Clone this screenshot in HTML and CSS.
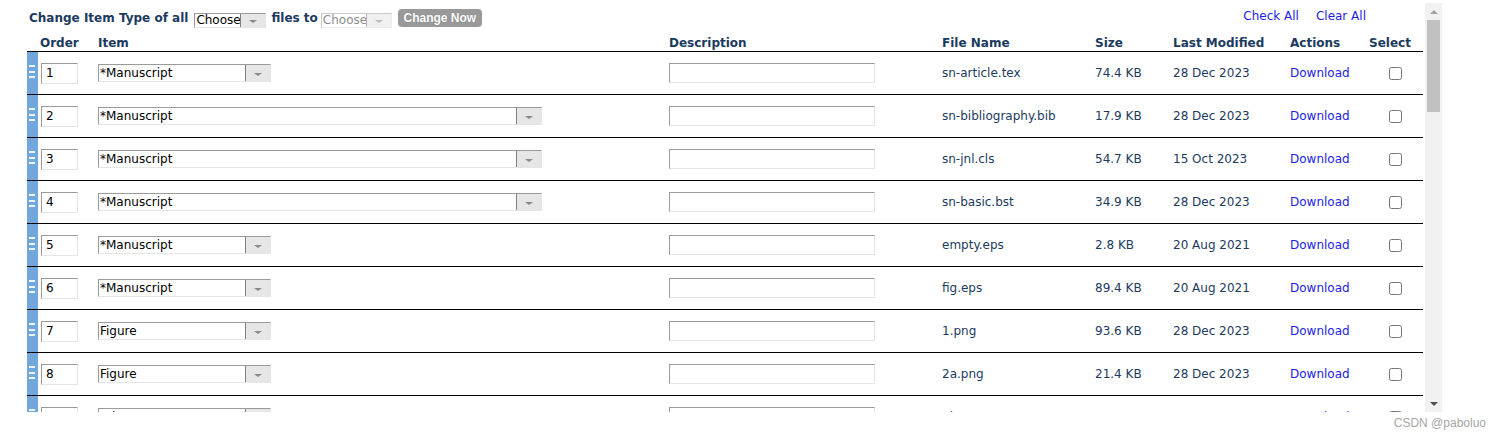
FILE: index.html
```html
<!DOCTYPE html>
<html>
<head>
<meta charset="utf-8">
<title>Files</title>
<link rel="stylesheet" href="styles.css">
</head>
<body>
<div class="frame">
  <div class="pane">
    <div class="toolbar">
      <div class="bulk">
        <span class="lbl">Change Item Type of all</span>
        <span class="sel sel-sm sel-first"><span class="sel-val">Choose</span><span class="sel-btn"><i class="tri"></i></span></span>
        <span class="lbl lbl-files">files to</span>
        <span class="sel sel-sm sel-off"><span class="sel-val">Choose</span><span class="sel-btn"><i class="tri"></i></span></span>
        <button class="btn-change">Change Now</button>
      </div>
      <div class="bulk-links"><a href="#">Check All</a><a href="#">Clear All</a></div>
    </div>

    <div class="list">
      <div class="row head">
        <div></div>
        <div class="c c-order">Order</div>
        <div class="c">Item</div>
        <div class="c">Description</div>
        <div class="c">File Name</div>
        <div class="c">Size</div>
        <div class="c">Last Modified</div>
        <div class="c">Actions</div>
        <div class="c">Select</div>
      </div>

      <div class="row">
        <div class="handle"><svg width="6" height="13" viewBox="0 0 6 13"><rect y="0" width="6" height="2"/><rect y="6" width="6" height="2"/><rect y="11" width="6" height="2"/></svg></div>
        <div class="c c-order"><input class="in in-order" value="1"></div>
        <div class="c"><span class="sel sel-item"><span class="sel-val">*Manuscript</span><span class="sel-btn"><i class="tri"></i></span></span></div>
        <div class="c"><input class="in in-desc"></div>
        <div class="c">sn-article.tex</div>
        <div class="c">74.4 KB</div>
        <div class="c">28 Dec 2023</div>
        <div class="c"><a href="#">Download</a></div>
        <div class="c c-check"><input type="checkbox"></div>
      </div>

      <div class="row">
        <div class="handle"><svg width="6" height="13" viewBox="0 0 6 13"><rect y="0" width="6" height="2"/><rect y="6" width="6" height="2"/><rect y="11" width="6" height="2"/></svg></div>
        <div class="c c-order"><input class="in in-order" value="2"></div>
        <div class="c"><span class="sel sel-item sel-wide"><span class="sel-val">*Manuscript</span><span class="sel-btn"><i class="tri"></i></span></span></div>
        <div class="c"><input class="in in-desc"></div>
        <div class="c">sn-bibliography.bib</div>
        <div class="c">17.9 KB</div>
        <div class="c">28 Dec 2023</div>
        <div class="c"><a href="#">Download</a></div>
        <div class="c c-check"><input type="checkbox"></div>
      </div>

      <div class="row">
        <div class="handle"><svg width="6" height="13" viewBox="0 0 6 13"><rect y="0" width="6" height="2"/><rect y="6" width="6" height="2"/><rect y="11" width="6" height="2"/></svg></div>
        <div class="c c-order"><input class="in in-order" value="3"></div>
        <div class="c"><span class="sel sel-item sel-wide"><span class="sel-val">*Manuscript</span><span class="sel-btn"><i class="tri"></i></span></span></div>
        <div class="c"><input class="in in-desc"></div>
        <div class="c">sn-jnl.cls</div>
        <div class="c">54.7 KB</div>
        <div class="c">15 Oct 2023</div>
        <div class="c"><a href="#">Download</a></div>
        <div class="c c-check"><input type="checkbox"></div>
      </div>

      <div class="row">
        <div class="handle"><svg width="6" height="13" viewBox="0 0 6 13"><rect y="0" width="6" height="2"/><rect y="6" width="6" height="2"/><rect y="11" width="6" height="2"/></svg></div>
        <div class="c c-order"><input class="in in-order" value="4"></div>
        <div class="c"><span class="sel sel-item sel-wide"><span class="sel-val">*Manuscript</span><span class="sel-btn"><i class="tri"></i></span></span></div>
        <div class="c"><input class="in in-desc"></div>
        <div class="c">sn-basic.bst</div>
        <div class="c">34.9 KB</div>
        <div class="c">28 Dec 2023</div>
        <div class="c"><a href="#">Download</a></div>
        <div class="c c-check"><input type="checkbox"></div>
      </div>

      <div class="row">
        <div class="handle"><svg width="6" height="13" viewBox="0 0 6 13"><rect y="0" width="6" height="2"/><rect y="6" width="6" height="2"/><rect y="11" width="6" height="2"/></svg></div>
        <div class="c c-order"><input class="in in-order" value="5"></div>
        <div class="c"><span class="sel sel-item"><span class="sel-val">*Manuscript</span><span class="sel-btn"><i class="tri"></i></span></span></div>
        <div class="c"><input class="in in-desc"></div>
        <div class="c">empty.eps</div>
        <div class="c">2.8 KB</div>
        <div class="c">20 Aug 2021</div>
        <div class="c"><a href="#">Download</a></div>
        <div class="c c-check"><input type="checkbox"></div>
      </div>

      <div class="row">
        <div class="handle"><svg width="6" height="13" viewBox="0 0 6 13"><rect y="0" width="6" height="2"/><rect y="6" width="6" height="2"/><rect y="11" width="6" height="2"/></svg></div>
        <div class="c c-order"><input class="in in-order" value="6"></div>
        <div class="c"><span class="sel sel-item"><span class="sel-val">*Manuscript</span><span class="sel-btn"><i class="tri"></i></span></span></div>
        <div class="c"><input class="in in-desc"></div>
        <div class="c">fig.eps</div>
        <div class="c">89.4 KB</div>
        <div class="c">20 Aug 2021</div>
        <div class="c"><a href="#">Download</a></div>
        <div class="c c-check"><input type="checkbox"></div>
      </div>

      <div class="row">
        <div class="handle"><svg width="6" height="13" viewBox="0 0 6 13"><rect y="0" width="6" height="2"/><rect y="6" width="6" height="2"/><rect y="11" width="6" height="2"/></svg></div>
        <div class="c c-order"><input class="in in-order" value="7"></div>
        <div class="c"><span class="sel sel-item"><span class="sel-val">Figure</span><span class="sel-btn"><i class="tri"></i></span></span></div>
        <div class="c"><input class="in in-desc"></div>
        <div class="c">1.png</div>
        <div class="c">93.6 KB</div>
        <div class="c">28 Dec 2023</div>
        <div class="c"><a href="#">Download</a></div>
        <div class="c c-check"><input type="checkbox"></div>
      </div>

      <div class="row">
        <div class="handle"><svg width="6" height="13" viewBox="0 0 6 13"><rect y="0" width="6" height="2"/><rect y="6" width="6" height="2"/><rect y="11" width="6" height="2"/></svg></div>
        <div class="c c-order"><input class="in in-order" value="8"></div>
        <div class="c"><span class="sel sel-item"><span class="sel-val">Figure</span><span class="sel-btn"><i class="tri"></i></span></span></div>
        <div class="c"><input class="in in-desc"></div>
        <div class="c">2a.png</div>
        <div class="c">21.4 KB</div>
        <div class="c">28 Dec 2023</div>
        <div class="c"><a href="#">Download</a></div>
        <div class="c c-check"><input type="checkbox"></div>
      </div>

      <div class="row">
        <div class="handle"><svg width="6" height="13" viewBox="0 0 6 13"><rect y="0" width="6" height="2"/><rect y="6" width="6" height="2"/><rect y="11" width="6" height="2"/></svg></div>
        <div class="c c-order"><input class="in in-order" value="9"></div>
        <div class="c"><span class="sel sel-item"><span class="sel-val">*Figure</span><span class="sel-btn"><i class="tri"></i></span></span></div>
        <div class="c"><input class="in in-desc"></div>
        <div class="c">2b.png</div>
        <div class="c">36.1 KB</div>
        <div class="c">28 Dec 2023</div>
        <div class="c"><a href="#">Download</a></div>
        <div class="c c-check"><input type="checkbox"></div>
      </div>
    </div>
  </div>

  <div class="scrollbar">
    <div class="sb-btn"><i class="tri-up"></i></div>
    <div class="sb-thumb"></div>
    <div class="sb-track"></div>
    <div class="sb-btn"><i class="tri-down"></i></div>
  </div>
</div>
<div class="watermark">CSDN @paboluo</div>
</body>
</html>
```

FILE: styles.css
```css
body {
  margin: 0;
  background: #fff;
  font-family: "DejaVu Sans", Verdana, sans-serif;
  font-size: 12px;
  color: #1b3a60;
}

a {
  color: #2222e6;
  text-decoration: none;
}

.frame {
  display: flex;
  width: 1442px;
  height: 409px;
  margin-top: 3px;
}

.pane {
  flex: 1;
  min-width: 0;
  overflow: hidden;
  padding: 0 2px 0 27px;
}

/* toolbar */
.toolbar {
  display: flex;
  align-items: center;
  justify-content: space-between;
  height: 26px;
  padding-top: 2px;
}

.bulk {
  display: flex;
  align-items: center;
  padding-left: 2px;
}

.lbl {
  font-weight: bold;
  white-space: nowrap;
}

.lbl-files {
  margin-left: 5px;
}

.bulk-links {
  display: flex;
  gap: 17px;
  margin-right: 57px;
  margin-bottom: 4px;
}

.btn-change {
  width: 84px;
  height: 18px;
  margin-left: 6px;
  padding: 0;
  border: 0;
  border-radius: 4px;
  background: #999;
  color: #fff;
  font: bold 12px "Liberation Sans", Arial, sans-serif;
  text-shadow: 0 0 1px #777;
}

/* pseudo selects */
.sel {
  display: inline-flex;
  box-sizing: border-box;
  height: 18px;
  border: 1px solid;
  border-color: #9a9a9a #e6e6e6 #e6e6e6 #9a9a9a;
  background: #fff;
  color: #000;
  vertical-align: middle;
}

.sel-val {
  flex: 1;
  min-width: 0;
  overflow: hidden;
  padding-left: 1px;
  line-height: 16px;
  white-space: nowrap;
}

.sel-btn {
  width: 24px;
  display: flex;
  align-items: center;
  justify-content: center;
  background: #e6e6e6;
  border-left: 1px solid #7f7f7f;
}

.tri {
  width: 0;
  height: 0;
  margin-top: 2px;
  border-left: 4px solid transparent;
  border-right: 4px solid transparent;
  border-top: 3px solid #888;
}

.sel-sm {
  width: 72px;
  height: 15px;
  margin-top: 5px;
}

.sel-sm .sel-val {
  line-height: 13px;
}

.sel-first {
  margin-left: 6px;
}

.sel-off {
  width: 71px;
  margin-left: 3px;
  border-color: #c8c8c8 #ececec #ececec #c8c8c8;
}

.sel-off .sel-val {
  color: #8d8d8d;
}

.sel-off .sel-btn {
  background: #f0f0f0;
  border-left-color: #b4b4b4;
}

.sel-off .tri {
  border-top-color: #bcbcbc;
}

.sel-item {
  width: 173px;
}

.sel-wide {
  width: 444px;
}

/* list grid */
.row {
  display: grid;
  grid-template-columns: 11px 56px 571px 273px 153px 78px 117px 79px 58px;
  align-items: center;
  box-sizing: border-box;
  height: 43px;
  border-bottom: 1px solid #000;
}

.row.head {
  height: 21px;
  padding-top: 4px;
  font-weight: bold;
}

.c {
  padding-left: 4px;
  white-space: nowrap;
}

.c-order {
  padding-left: 3px;
}

.head .c-order {
  padding-left: 2px;
}

.c-check {
  padding-left: 0;
  display: flex;
  justify-content: center;
}

.c-check input {
  margin: 0 0 0 2px;
  width: 13px;
  height: 13px;
}

.handle {
  align-self: stretch;
  background: #72a7dc;
  padding: 13px 0 0 2px;
}

.handle svg {
  display: block;
  fill: #eef4fb;
}

.in {
  box-sizing: border-box;
  display: block;
  height: 21px;
  margin: 0;
  padding: 0 4px;
  border: 1px solid;
  border-color: #9a9a9a #e4e4e4 #e4e4e4 #9a9a9a;
  background: #fff;
  color: #000;
  font: 12px "DejaVu Sans", Verdana, sans-serif;
  outline: none;
}

.in-order {
  width: 37px;
}

.in-desc {
  width: 206px;
  height: 20px;
}

/* scrollbar */
.scrollbar {
  width: 17px;
  background: #f1f1f1;
  display: flex;
  flex-direction: column;
}

.sb-btn {
  height: 17px;
  display: flex;
  align-items: center;
  justify-content: center;
}

.tri-up {
  width: 0;
  height: 0;
  border-left: 4px solid transparent;
  border-right: 4px solid transparent;
  border-bottom: 4px solid #a3a3a3;
}

.tri-down {
  width: 0;
  height: 0;
  border-left: 4px solid transparent;
  border-right: 4px solid transparent;
  border-top: 4px solid #505050;
}

.sb-thumb {
  height: 92px;
  margin: 0 2px;
  background: #c1c1c1;
}

.sb-track {
  flex: 1;
}

.watermark {
  margin-top: 4px;
  padding-right: 15px;
  text-align: right;
  font: 12px "Liberation Sans", Arial, sans-serif;
  color: #a6a6a6;
}
```
